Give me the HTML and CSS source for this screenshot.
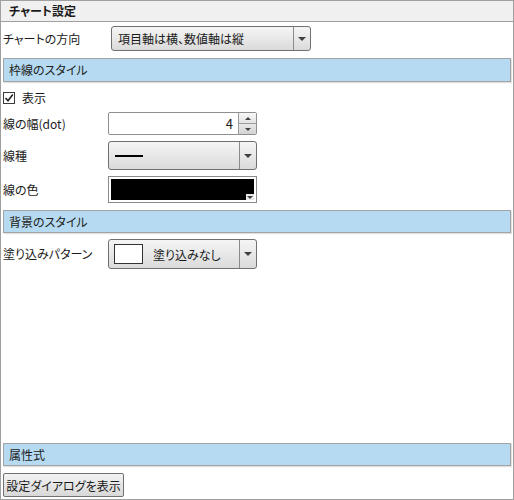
FILE: index.html
```html
<!DOCTYPE html>
<html lang="ja">
<head>
<meta charset="utf-8">
<title>チャート設定</title>
<link rel="stylesheet" href="styles.css">
</head>
<body>
<div class="panel">
  <div class="title">チャート設定</div>

  <div class="row row-dir">
    <div class="label label-wide">チャートの方向</div>
    <div class="combo combo-dir">
      <span class="combo-text">項目軸は横、数値軸は縦</span>
      <span class="combo-btn"><i class="tri-down"></i></span>
    </div>
  </div>

  <div class="section sec-line">枠線のスタイル</div>

  <div class="check-row">
    <span class="checkbox">
      <svg width="10" height="10" viewBox="0 0 10 10"><path d="M1.5 5 L4 7.8 L8.8 1.5" fill="none" stroke="#222" stroke-width="1.6"/></svg>
    </span>
    <span class="check-text">表示</span>
  </div>

  <div class="row row-width">
    <div class="label">線の幅(dot)</div>
    <div class="spin">
      <span class="spin-val">4</span>
      <span class="spin-btns">
        <span class="sb sb-up"><i class="tri-up"></i></span>
        <span class="sb sb-down"><i class="tri-down"></i></span>
      </span>
    </div>
  </div>

  <div class="row row-type">
    <div class="label">線種</div>
    <div class="combo combo-std">
      <span class="combo-text"><span class="line-sample"></span></span>
      <span class="combo-btn"><i class="tri-down"></i></span>
    </div>
  </div>

  <div class="row row-color">
    <div class="label">線の色</div>
    <div class="color-box">
      <div class="color-fill"><span class="color-arrow"><i class="tri-down tri-small"></i></span></div>
    </div>
  </div>

  <div class="section sec-bg">背景のスタイル</div>

  <div class="row row-fill">
    <div class="label">塗り込みパターン</div>
    <div class="combo combo-std combo-fill">
      <span class="combo-text"><span class="swatch"></span><span class="fill-text">塗り込みなし</span></span>
      <span class="combo-btn"><i class="tri-down"></i></span>
    </div>
  </div>

  <div class="spacer"></div>

  <div class="section sec-attr">属性式</div>

  <div class="btn-row">
    <button class="btn">設定ダイアログを表示</button>
  </div>
</div>
</body>
</html>
```

FILE: styles.css
```css
* { box-sizing: border-box; }

html, body {
  margin: 0;
  padding: 0;
  background: #ffffff;
}

body {
  font-family: "Noto Sans CJK JP", "Noto Sans", "Liberation Sans", sans-serif;
  font-size: 12px;
  color: #1a1a1a;
  font-feature-settings: "palt";
}

.panel {
  width: 514px;
  height: 500px;
  border: 1px solid #a0a0a0;
  display: flex;
  flex-direction: column;
  padding: 0 2px 2px 2px;
}

.title {
  height: 21px;
  margin: 0 -2px;
  padding-left: 8px;
  background: #f0f0f0;
  border-bottom: 1px solid #a0a0a0;
  font-weight: bold;
  line-height: 20px;
  flex: none;
}

.row {
  display: flex;
  align-items: center;
  flex: none;
}

.label {
  width: 105px;
  line-height: 16px;
  padding-left: 0;
}

.label-wide {
  width: 108px;
}

.row-dir { margin-top: 4px; height: 25px; }
.row-width { margin-top: 7px; height: 23px; }
.row-type { margin-top: 6px; height: 29px; }
.row-color { margin-top: 6px; height: 27px; }
.row-fill { margin-top: 6px; height: 30px; }

/* combo boxes */
.combo {
  display: flex;
  height: 100%;
  border: 1px solid #707070;
  border-radius: 3px;
  background: linear-gradient(#f5f5f5, #e8e8e8 50%, #dadada);
}

.combo-dir { width: 200px; }
.combo-std { width: 149px; }

.combo-text {
  flex: 1;
  display: flex;
  align-items: center;
  padding-left: 6px;
  white-space: nowrap;
}

.combo-btn {
  width: 17px;
  border-left: 1px solid #8a8a8a;
  display: flex;
  align-items: center;
  justify-content: center;
}

.tri-down {
  display: block;
  width: 0;
  height: 0;
  border-left: 4px solid transparent;
  border-right: 4px solid transparent;
  border-top: 4px solid #404040;
}

.tri-up {
  display: block;
  width: 0;
  height: 0;
  border-left: 3px solid transparent;
  border-right: 3px solid transparent;
  border-bottom: 3px solid #404040;
}

.tri-small {
  border-left-width: 3px;
  border-right-width: 3px;
  border-top-width: 3px;
}

.line-sample {
  display: block;
  width: 28px;
  height: 2px;
  background: #000;
}

/* section bars */
.section {
  flex: none;
  height: 23px;
  background: #b5daf1;
  border: 1px solid #a3a3a3;
  box-shadow: 1px 1px 1px rgba(0, 0, 0, 0.12);
  padding-left: 5px;
  line-height: 21px;
  color: #222;
}

.sec-line { margin-top: 7px; height: 24px; line-height: 22px; }
.sec-bg { margin-top: 7px; }
.sec-attr { margin-top: 0; }

/* checkbox */
.check-row {
  flex: none;
  display: flex;
  align-items: center;
  margin-top: 9px;
  height: 14px;
}

.checkbox {
  width: 12px;
  height: 12px;
  border: 1px solid #3a3a3a;
  background: #fff;
  display: flex;
  align-items: center;
  justify-content: center;
}

.check-text {
  margin-left: 7px;
  line-height: 14px;
}

/* spin box */
.spin {
  width: 149px;
  height: 100%;
  display: flex;
  border: 1px solid #8f8f8f;
  border-radius: 2px;
  background: #fff;
}

.spin-val {
  flex: 1;
  text-align: right;
  padding-right: 5px;
  font-size: 13px;
  line-height: 21px;
}

.spin-btns {
  width: 18px;
  display: flex;
  flex-direction: column;
  border-left: 1px solid #9a9a9a;
}

.sb {
  flex: 1;
  display: flex;
  align-items: center;
  justify-content: center;
  background: linear-gradient(#f7f7f7, #e3e3e3);
}

.sb-down {
  border-top: 1px solid #9a9a9a;
  background: linear-gradient(#e8e8e8, #d4d4d4);
}

.sb-down .tri-down {
  border-left-width: 3px;
  border-right-width: 3px;
  border-top-width: 3px;
}

/* colour box */
.color-box {
  width: 149px;
  height: 100%;
  border: 1px solid #8a8a8a;
  background: #fff;
  padding: 2px;
}

.color-fill {
  height: 100%;
  background: #000;
  display: flex;
  align-items: flex-end;
  justify-content: flex-end;
}

.color-arrow {
  width: 8px;
  height: 6px;
  background: #e8e8e8;
  display: flex;
  align-items: center;
  justify-content: center;
}

/* fill pattern */
.swatch {
  display: block;
  width: 29px;
  height: 20px;
  border: 1px solid #333;
  background: #fff;
}

.combo-fill .combo-text {
  padding-left: 5px;
}

.fill-text {
  margin-left: 10px;
}

.spacer { flex: 1; }

/* button */
.btn-row {
  flex: none;
  margin-top: 7px;
  height: 24px;
  display: flex;
}

.btn {
  font-family: inherit;
  font-size: 12px;
  font-feature-settings: "palt";
  color: #1a1a1a;
  width: 121px;
  height: 24px;
  padding: 0;
  border: 1px solid #707070;
  border-radius: 2px;
  background: linear-gradient(#f3f3f3, #e6e6e6 50%, #d8d8d8);
}
```
